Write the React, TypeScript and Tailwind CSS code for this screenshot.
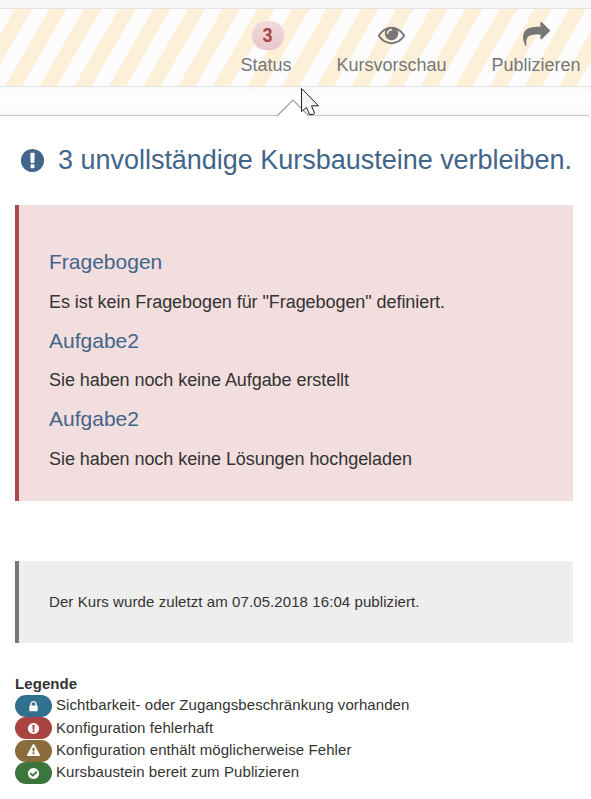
import React from "react";

const ICONS = {
  eye: "M1664 960q-152-236-381-353 61 104 61 225 0 185-131.500 316.500t-316.500 131.500-316.500-131.500-131.500-316.500q0-121 61-225-229 117-381 353 133 205 333.500 326.500t434.500 121.500 434.500-121.500 333.500-326.500zm-720-384q0-20-14-34t-34-14q-125 0-214.500 89.500t-89.500 214.500q0 20 14 34t34 14 34-14 14-34q0-86 61-147t147-61q20 0 34-14t14-34zm848 384q0 34-20 69-140 230-376.500 368.500t-499.500 138.500-499.500-139-376.500-368q-20-35-20-69t20-69q140-229 376.500-368t499.500-139 499.500 139 376.500 368q20 35 20 69z",
  share: "M1792 640q0 26-19 45l-512 512q-19 19-45 19t-45-19-19-45v-256h-224q-98 0-175.500 6t-154 21.500-133 42.500-105.500 69.500-80 101-48.500 138.500-17.500 181q0 55 5 123 0 6 2.500 23.500t2.500 26.500q0 15-8.500 25t-23.500 10q-16 0-28-17-7-9-13-22t-13.500-30-10.500-24q-127-285-127-451 0-199 53-333 162-403 875-403h224v-256q0-26 19-45t45-19 45 19l512 512q19 19 19 45z",
  alert: "M896 128q209 0 385.500 103t279.500 279.500 103 385.500-103 385.500-279.500 279.500-385.500 103-385.500-103-279.500-279.500-103-385.500 103-385.500 279.500-279.500 385.500-103zm128 1247v-190q0-14-9-23.500t-22-9.500h-192q-13 0-23 10t-10 23v190q0 13 10 23t23 10h192q13 0 22-9.500t9-23.500zm-2-344l18-621q0-12-10-18-10-8-24-8h-220q-14 0-24 8-10 6-10 18l17 621q0 10 10 17.500t24 7.500h185q14 0 23.500-7.500t10.500-17.500z",
  lock: "M640 768h512v-192q0-106-75-181t-181-75-181 75-75 181v192zm832 96v576q0 40-28 68t-68 28h-960q-40 0-68-28t-28-68v-576q0-40 28-68t68-28h32v-192q0-184 132-316t316-132 316 132 132 316v192h32q40 0 68 28t28 68z",
  warning: "M1024 1375v-190q0-14-9.500-23.500t-22.500-9.500h-192q-13 0-22.500 9.500t-9.500 23.500v190q0 14 9.500 23.500t22.500 9.500h192q13 0 22.500-9.500t9.500-23.500zm-2-374l18-459q0-12-10-19-13-11-24-11h-220q-11 0-24 11-10 7-10 21l17 457q0 10 10 16.500t24 6.500h185q14 0 23.500-6.500t10.500-16.500zm-14-934l768 1408q35 63-2 126-17 29-46.500 46t-63.500 17h-1536q-34 0-63.500-17t-46.500-46q-37-63-2-126l768-1408q17-31 47-49t65-18 65 18 47 49z",
  check: "M1412 734q0-28-18-46l-91-90q-19-19-45-19t-45 19l-408 407-226-226q-19-19-45-19t-45 19l-91 90q-18 18-18 46 0 27 18 45l362 362q19 19 45 19 27 0 46-19l543-543q18-18 18-45zm252 162q0 209-103 385.500t-279.500 279.500-385.500 103-385.500-103-279.500-279.500-103-385.500 103-385.500 279.500-279.500 385.500-103 385.500 103 279.500 279.500 103 385.500z",
};

function Icon({ name, className }: { name: keyof typeof ICONS; className: string }) {
  return (
    <svg viewBox="0 0 1792 1792" fill="currentColor" className={className}>
      <path d={ICONS[name]} />
    </svg>
  );
}

function Tool({ label, className, children }: { label: string; className: string; children: React.ReactNode }) {
  return (
    <div className={`flex flex-col items-center ${className}`}>
      <div className="flex h-[42px] items-center pt-[9px]">{children}</div>
      <span className="mt-[3px] text-[18px] leading-[22px] whitespace-nowrap">{label}</span>
    </div>
  );
}

const ISSUES = [
  { title: "Fragebogen", text: 'Es ist kein Fragebogen für "Fragebogen" definiert.' },
  { title: "Aufgabe2", text: "Sie haben noch keine Aufgabe erstellt" },
  { title: "Aufgabe2", text: "Sie haben noch keine Lösungen hochgeladen" },
];

const LEGEND: { icon: keyof typeof ICONS; color: string; text: string }[] = [
  { icon: "lock", color: "bg-[#31708f]", text: "Sichtbarkeit- oder Zugangsbeschränkung vorhanden" },
  { icon: "alert", color: "bg-[#a94442]", text: "Konfiguration fehlerhaft" },
  { icon: "warning", color: "bg-[#8a6d3b]", text: "Konfiguration enthält möglicherweise Fehler" },
  { icon: "check", color: "bg-[#3c763d]", text: "Kursbaustein bereit zum Publizieren" },
];

export default function App() {
  return (
    <div className="h-[799px] w-[591px] overflow-hidden bg-white font-['Liberation_Sans',Arial,sans-serif] text-[#333]">
      <div className="h-2 bg-[#f7f7f7]" />
      <header className="flex h-[79px] border-y border-[#e3e3e3] bg-[repeating-linear-gradient(120deg,#fcfcfc_0,#fcfcfc_12.8px,#feefd9_12.8px,#feefd9_27.8px,#fcfcfc_27.8px,#fcfcfc_30px)] text-[#777]">
        <Tool label="Status" className="ml-[240px] w-[52px]">
          <span className="mt-px ml-1 flex h-[29px] w-8 items-center justify-center rounded-[14px] bg-linear-to-b from-[#f1dadc] to-[#e8c7cb] text-[20px] font-bold text-[#a94442]">
            <span className="scale-x-90">3</span>
          </span>
        </Tool>
        <Tool label="Kursvorschau" className="ml-[44px] w-[111px]">
          <Icon name="eye" className="size-[27px]" />
        </Tool>
        <Tool label="Publizieren" className="ml-[44px] w-[90px]">
          <Icon name="share" className="size-[27px]" />
        </Tool>
      </header>
      <div className="relative h-[28px] bg-linear-to-b from-[#f9f9f9] via-white to-[#f8f8f8]">
        <svg className="absolute top-[11px] left-[276px]" width="34" height="19" viewBox="0 0 34 19">
          <path d="M1 18L17 2L33 18" fill="#fff" stroke="#999" strokeWidth="1.1" />
        </svg>
        <svg className="absolute top-0 left-[300px] z-10" width="22" height="30" viewBox="0 0 22 30">
          <path d="M1.500 1.500V24.500L6.500 20.500L9.500 27.500H13.500L14.500 26L11.500 18.800H18.500Z" fill="#f3f4f8" stroke="#222" strokeWidth="1" />
        </svg>
      </div>
      <main className="h-[684px] rounded-tr-[5px] border-t border-[#c3c3c3] bg-white px-[15px] pt-[26px]">
        <h1 className="flex h-[36px] items-center pl-[4px] text-[27px] tracking-[-0.02px] whitespace-nowrap text-[#42658a]">
          <Icon name="alert" className="mr-[12px] size-[27px] shrink-0" />
          3 unvollständige Kursbausteine verbleiben.
        </h1>
        <section className="mt-[27px] h-[296px] w-[558px] border-l-4 border-[#a94a4c] bg-[#f2dede] pt-[44px] pl-[30px]">
          {ISSUES.map((issue, i) => (
            <div key={i} className="h-[78.500px]">
              <h2 className="text-[21px] leading-[26px] text-[#42658a]">{issue.title}</h2>
              <p className="mt-[13.500px] text-[18px] leading-[26px] tracking-[-0.06px]">{issue.text}</p>
            </div>
          ))}
        </section>
        <section className="mt-[60px] flex h-[82px] w-[558px] items-center border-l-4 border-[#777] bg-[#eee] pl-[30px] text-[15px] tracking-[0.085px]">
          Der Kurs wurde zuletzt am 07.05.2018 16:04 publiziert.
        </section>
        <section className="mt-[30px] text-[15px] tracking-[0.085px]">
          <h3 className="h-[22px] leading-[21px] font-bold">Legende</h3>
          <ul>
            {LEGEND.map((item) => (
              <li key={item.icon} className="flex h-[22.300px] items-center">
                <span className={`mr-1 flex h-[22px] w-[37px] shrink-0 items-center justify-center rounded-full text-white ${item.color}`}>
                  <Icon name={item.icon} className="size-[13px]" />
                </span>
                <span className="-mt-[1.500px] leading-[20px] whitespace-nowrap">{item.text}</span>
              </li>
            ))}
          </ul>
        </section>
      </main>
    </div>
  );
}
